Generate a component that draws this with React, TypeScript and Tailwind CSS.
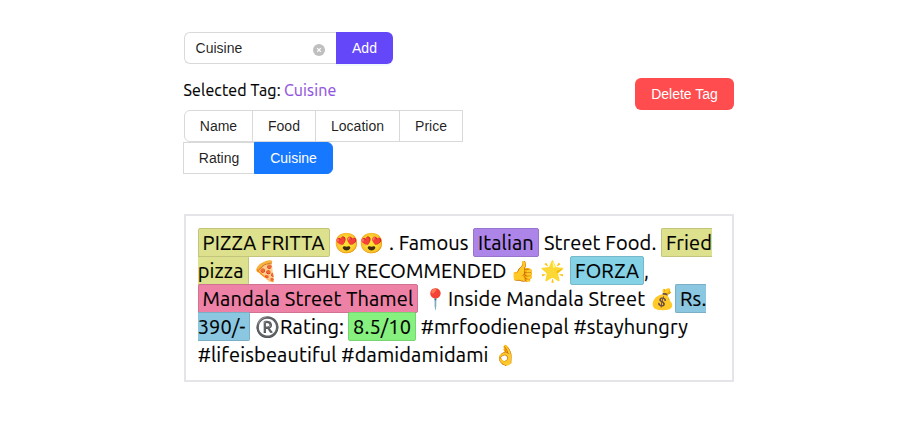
import type { ReactNode } from "react";

const sans = "font-['Liberation_Sans',Arial,sans-serif]";
const human =
  "font-['Ubuntu','Noto_Sans',sans-serif] tracking-[0.13px] [-webkit-text-stroke:0.16px_currentColor]";

function TagButton({ className, children }: { className: string; children: ReactNode }) {
  return (
    <button
      className={`${sans} h-8 shrink-0 border text-sm leading-[30px] whitespace-nowrap ${className}`}
    >
      {children}
    </button>
  );
}

function Line({ children }: { children: ReactNode }) {
  return <div className="flex h-7 items-start whitespace-nowrap">{children}</div>;
}

function Mark({ className, children }: { className: string; children: ReactNode }) {
  return (
    <mark className={`relative h-[29px] shrink-0 border-y text-black leading-[27px] ${className}`}>
      {children}
    </mark>
  );
}

function Text({ className = "", children }: { className?: string; children: ReactNode }) {
  return <span className={`shrink-0 leading-[29px] ${className}`}>{children}</span>;
}

function Emoji({ className = "", children }: { className?: string; children: ReactNode }) {
  return (
    <span
      className={`shrink-0 font-['Noto_Color_Emoji',sans-serif] leading-[30px] tracking-normal [-webkit-text-stroke:0] ${className}`}
    >
      {children}
    </span>
  );
}

export default function App() {
  return (
    <div className="h-[422px] w-[918px] bg-white pt-8 pl-[184px]">
      <main className="w-[550px]">
        <div className={`${sans} flex text-sm`}>
          <div className="flex h-8 w-[152px] items-center justify-between rounded-l-md border border-r-0 border-[#d9d9d9] pr-[11px] pl-[10.6px] text-black/88">
            <span>Cuisine</span>
            <svg viewBox="0 0 12 12" className="mt-1 size-3">
              <circle cx="6" cy="6" r="6" fill="#bfbfbf" />
              <path d="M4.2 4.2l3.6 3.6M7.8 4.2L4.2 7.8" stroke="#fff" strokeWidth="1.2" />
            </svg>
          </div>
          <button className="h-8 w-[57px] rounded-r-md bg-[#6547fa] text-white shadow-[0_2px_0_rgba(5,145,255,0.06)]">
            Add
          </button>
        </div>

        <div className="mt-3.5 flex items-start justify-between">
          <div>
            <p className={`${human} flex h-8 text-base leading-6 whitespace-nowrap text-black`}>
              <span className="-ml-[0.4px] w-[100.4px]">Selected Tag:</span>
              <span className="text-[#9254de]">Cuisine</span>
            </p>
            <div className="flex text-black/88">
              <TagButton className="w-[69px] rounded-l-md border-[#d9d9d9]">Name</TagButton>
              <TagButton className="-ml-px w-16 border-[#d9d9d9]">Food</TagButton>
              <TagButton className="-ml-px w-[85px] border-[#d9d9d9]">Location</TagButton>
              <TagButton className="-ml-px w-16 border-[#d9d9d9]">Price</TagButton>
            </div>
            <div className="-ml-px flex text-black/88">
              <TagButton className="w-[72px] border-[#d9d9d9]">Rating</TagButton>
              <TagButton className="-ml-px w-[79px] rounded-r-md border-[#1677ff] bg-[#1677ff] text-white">
                Cuisine
              </TagButton>
            </div>
          </div>
          <button className={`${sans} h-8 w-[99px] rounded-md bg-[#ff4d4f] text-sm text-white`}>
            Delete Tag
          </button>
        </div>

        <section
          className={`${human} mt-10 h-[168px] border-2 border-[#e5e5e9] p-3 text-xl text-black`}
        >
          <Line>
            <Mark className="w-[132px] rounded-xs border-x border-[#c2c57b] bg-[#dde08c] pl-[3.6px]">
              PIZZA FRITTA
            </Mark>
            <Emoji className="ml-[4.6px] w-[54.4px]">😍😍</Emoji>
            <Text className="w-[84px]">. Famous</Text>
            <Mark className="w-[66px] rounded-xs border-x border-[#9875cc] bg-[#ad85e8] pl-1">
              Italian
            </Mark>
            <Text className="ml-[5px] w-[117px]">Street Food.</Text>
            <Mark className="w-[51px] rounded-l-xs border-l border-[#c2c57b] bg-[#dde08c] pl-1">
              Fried
            </Mark>
          </Line>
          <Line>
            <Mark className="w-[51px] rounded-r-xs border-r border-[#c2c57b] bg-[#dde08c]">
              <span className="-ml-[0.3px]">pizza</span>
            </Mark>
            <Emoji className="ml-1 w-[30px]">🍕</Emoji>
            <Text className="w-[227px]">HIGHLY RECOMMENDED</Text>
            <Emoji className="w-[30px]">👍</Emoji>
            <Emoji className="w-[30px]">🌟</Emoji>
            <Mark className="w-[74px] rounded-xs border-x border-[#75b9ca] bg-[#85d2e6] pl-1">
              FORZA
            </Mark>
            <Text>,</Text>
          </Line>
          <Line>
            <Mark className="w-[220px] rounded-xs border-x border-[#d17292] bg-[#ee82a6] pl-[3.6px]">
              Mandala Street Thamel
            </Mark>
            <Emoji className="ml-[5px] w-[25px]">📍</Emoji>
            <Text className="w-[202px]">Inside Mandala Street</Text>
            <Emoji className="w-[25px]">💰</Emoji>
            <Mark className="w-[31px] rounded-l-xs border-l border-[#7aafc5] bg-[#8bc7e0] pl-1">
              Rs.
            </Mark>
          </Line>
          <Line>
            <Mark className="w-[52px] rounded-r-xs border-r border-[#7aafc5] bg-[#8bc7e0]">
              <span className="-ml-[0.3px]">390/-</span>
            </Mark>
            <Emoji className="ml-[5px] w-[25px]">®️</Emoji>
            <Text className="w-[68px]">Rating:</Text>
            <Mark className="w-[68px] rounded-xs border-x border-[#77d470] bg-[#87f17f] pl-1">
              8.5/10
            </Mark>
            <Text className="ml-[4.7px]">#mrfoodienepal #stayhungry</Text>
          </Line>
          <Line>
            <Text className="-ml-[0.3px] w-[295.3px]">#lifeisbeautiful #damidamidami</Text>
            <Emoji>👌</Emoji>
          </Line>
        </section>
      </main>
    </div>
  );
}
